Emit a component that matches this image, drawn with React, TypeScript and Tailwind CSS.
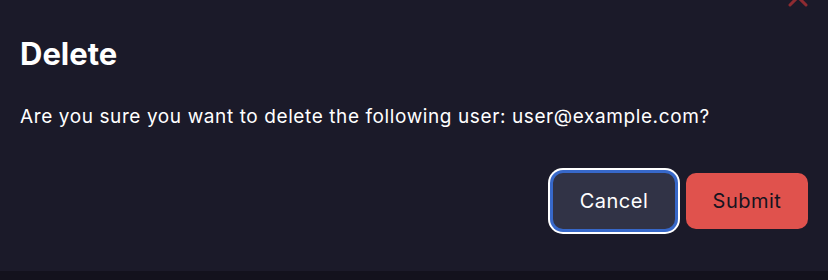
import React from 'react'

export default function App() {
    return (
        <div className="w-[828px] h-[280px] bg-[#13121d] overflow-hidden" style={{ fontFamily: 'Inter, "Noto Sans", sans-serif' }}>
            <div className="relative h-[271px] bg-[#1b1a29] px-5 pt-[35px]">
                {/* Close icon, mostly scrolled out of view */}
                <svg className="absolute right-[19px] top-[-14px]" width="22" height="22" viewBox="0 0 22 22" fill="none">
                    <path d="M3 3L19 19M19 3L3 19" stroke="#8e2b31" strokeWidth="3" strokeLinecap="round" />
                </svg>

                <h2 className="text-[31px] leading-[38px] font-bold text-white">Delete</h2>

                <p className="mt-[31px] text-[19px] leading-[26px] tracking-[0.6px] text-white">
                    Are you sure you want to delete the following user: user@example.com?
                </p>

                <div className="mt-[43px] flex justify-end gap-[11px]">
                    <button className="h-[56px] w-[122px] rounded-[10px] bg-[#313346] text-[20px] tracking-[0.5px] text-white outline-none ring-[3px] ring-[#3768c9] shadow-[0_0_0_5px_#ffffff]">
                        Cancel
                    </button>
                    <button className="h-[56px] w-[122px] rounded-[10px] bg-[#e0524d] text-[20px] tracking-[0.5px] text-[#151420]">
                        Submit
                    </button>
                </div>
            </div>
        </div>
    )
}
